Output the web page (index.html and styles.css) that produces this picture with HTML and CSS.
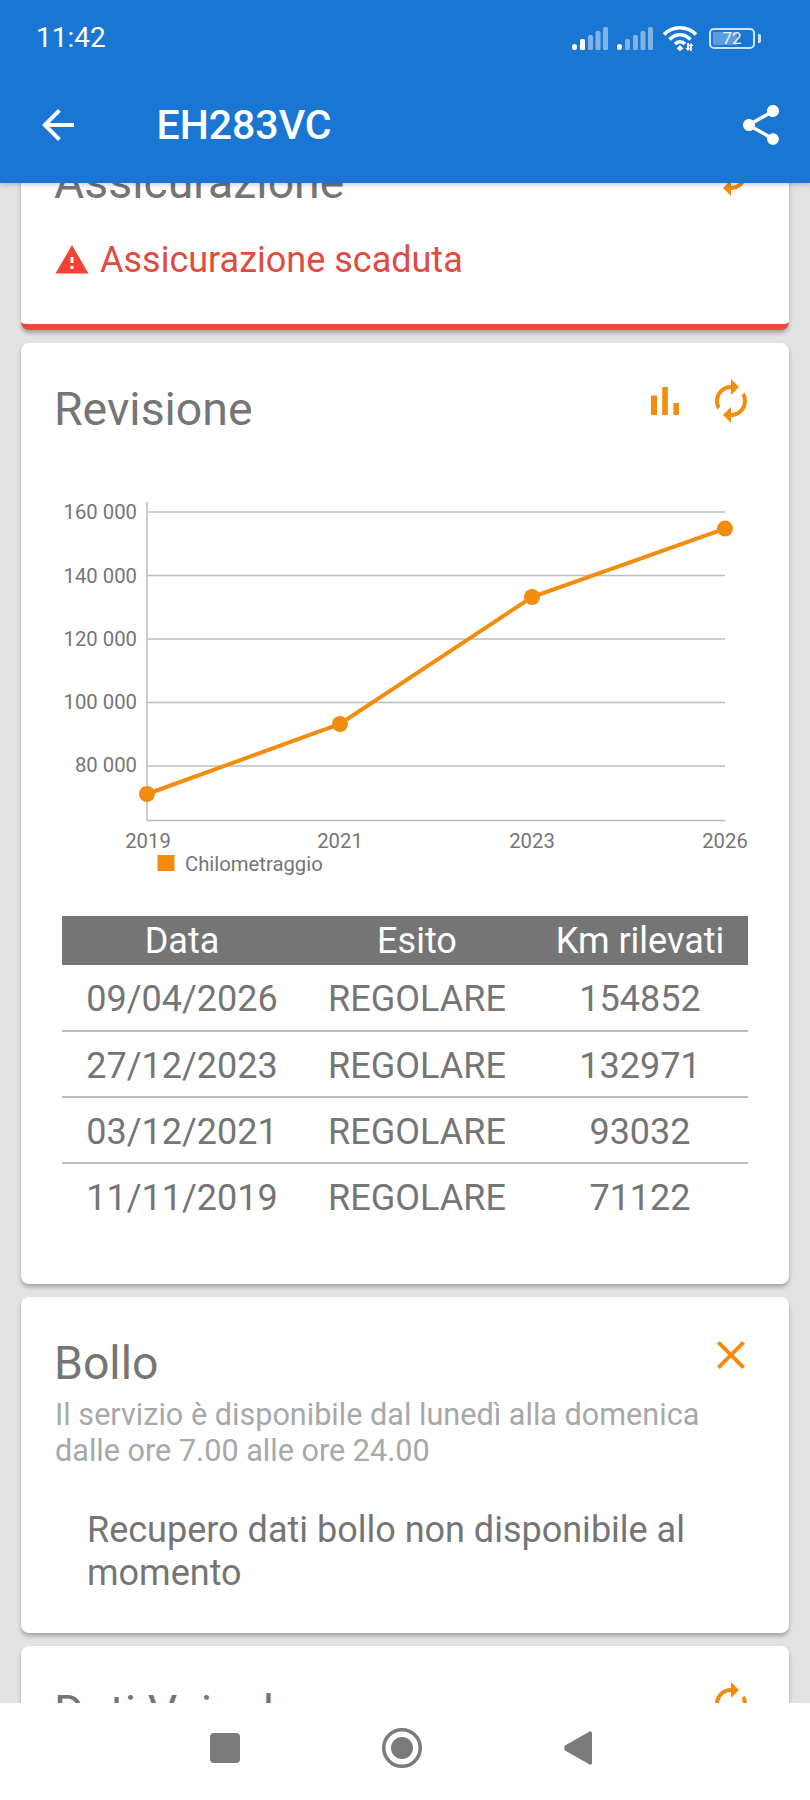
FILE: index.html
```html
<!DOCTYPE html>
<html lang="it">
<head>
<meta charset="utf-8">
<title>EH283VC</title>
<link rel="stylesheet" href="styles.css">
</head>
<body>
<div class="phone">
  <header class="topbar">
    <div class="status">
      <span class="time">11:42</span>
      <div class="status-icons">
        <svg class="signal" viewBox="0 0 36 23"><rect class="on" x="0" y="17" width="5" height="6" rx="2.5"/><rect class="on" x="8" y="12" width="5" height="11" rx="1.5"/><rect class="off" x="16" y="8" width="5" height="15" rx="1.5"/><rect class="off" x="23.500" y="4" width="5" height="19" rx="1.5"/><rect class="off" x="31" y="0" width="5" height="23" rx="1.5"/></svg>
        <svg class="signal" viewBox="0 0 36 23"><rect class="on" x="0" y="17" width="5" height="6" rx="2.5"/><rect class="off" x="8" y="12" width="5" height="11" rx="1.5"/><rect class="off" x="16" y="8" width="5" height="15" rx="1.5"/><rect class="off" x="23.500" y="4" width="5" height="19" rx="1.5"/><rect class="off" x="31" y="0" width="5" height="23" rx="1.5"/></svg>
        <svg class="wifi" viewBox="0 0 34 26"><path class="wifi-arc" d="M1 9.500C10 .5 24 .5 33 9.500M6.500 14.500C13 8 21 8 27.500 14.500M12 19C15 16 19 16 22 19"/><path class="wifi-fill" d="M17 20l3.500 3.500L17 26l-3.500-2.500zM24 18h2v5h1.500L25 26l-2.500-3H24zM28 18l2.500 3H29v5h-2v-5h-1.500z"/></svg>
        <div class="battery"><span class="battery-level"></span><span class="battery-text">72</span></div>
        <span class="battery-nub"></span>
      </div>
    </div>
    <div class="appbar">
      <svg class="icon-white" viewBox="0 0 24 24"><path d="M20 11H7.830l5.590-5.590L12 4l-8 8 8 8 1.410-1.410L7.830 13H20v-2z"/></svg>
      <h1 class="plate">EH283VC</h1>
      <svg class="icon-white share" viewBox="0 0 24 24"><path d="M18 16.080c-.76 0-1.440.3-1.960.77L8.910 12.700c.05-.23.09-.46.09-.7s-.04-.47-.09-.7l7.050-4.110c.54.5 1.250.81 2.040.81 1.660 0 3-1.340 3-3s-1.340-3-3-3-3 1.340-3 3c0 .24.04.47.09.7L8.040 9.810C7.500 9.310 6.790 9 6 9c-1.660 0-3 1.340-3 3s1.340 3 3 3c.79 0 1.500-.31 2.040-.81l7.120 4.160c-.05.21-.08.43-.08.65 0 1.610 1.310 2.920 2.920 2.920 1.610 0 2.920-1.310 2.920-2.920s-1.310-2.920-2.920-2.920z"/></svg>
    </div>
  </header>

  <main class="content">
    <section class="card card-alert">
      <div class="card-head">
        <h2>Assicurazione</h2>
        <div class="actions">
          <svg class="icon-orange mirrored" viewBox="0 0 24 24"><path d="M12 4V1L8 5l4 4V6c3.310 0 6 2.690 6 6 0 1.010-.25 1.970-.7 2.800l1.460 1.460C19.540 15.030 20 13.570 20 12c0-4.420-3.580-8-8-8zm0 14c-3.310 0-6-2.690-6-6 0-1.010.25-1.970.7-2.800L5.240 7.740C4.460 8.970 4 10.430 4 12c0 4.420 3.580 8 8 8v3l4-4-4-4v3z"/></svg>
        </div>
      </div>
      <p class="alert">
        <svg class="icon-red" viewBox="0 0 24 24"><path d="M1 21h22L12 2 1 21zm12-3h-2v-2h2v2zm0-4h-2v-4h2v4z"/></svg>
        <span>Assicurazione scaduta</span>
      </p>
    </section>

    <section class="card card-revision">
      <div class="card-head">
        <h2>Revisione</h2>
        <div class="actions">
          <svg class="icon-orange" viewBox="0 0 24 24"><path d="M5 9.200h3V19H5zM10.600 5h2.800v14h-2.800zm5.600 8H19v6h-2.800z"/></svg>
          <svg class="icon-orange mirrored" viewBox="0 0 24 24"><path d="M12 4V1L8 5l4 4V6c3.310 0 6 2.690 6 6 0 1.010-.25 1.970-.7 2.800l1.460 1.460C19.540 15.030 20 13.570 20 12c0-4.420-3.580-8-8-8zm0 14c-3.310 0-6-2.690-6-6 0-1.010.25-1.970.7-2.800L5.240 7.740C4.460 8.970 4 10.430 4 12c0 4.420 3.580 8 8 8v3l4-4-4-4v3z"/></svg>
        </div>
      </div>
      <svg class="chart" viewBox="0 0 700 390">
        <g class="grid">
          <line x1="92" y1="22" x2="670" y2="22"/>
          <line x1="92" y1="85.500" x2="670" y2="85.500"/>
          <line x1="92" y1="149" x2="670" y2="149"/>
          <line x1="92" y1="212.500" x2="670" y2="212.500"/>
          <line x1="92" y1="276" x2="670" y2="276"/>
          <line x1="92" y1="330.500" x2="670" y2="330.500"/>
          <line x1="92" y1="12" x2="92" y2="331"/>
        </g>
        <g class="ylabels">
          <text x="82" y="29">160 000</text>
          <text x="82" y="92.500">140 000</text>
          <text x="82" y="156">120 000</text>
          <text x="82" y="219">100 000</text>
          <text x="82" y="282">80 000</text>
        </g>
        <g class="xlabels">
          <text x="93" y="358">2019</text>
          <text x="285" y="358">2021</text>
          <text x="477" y="358">2023</text>
          <text x="670" y="358">2026</text>
        </g>
        <polyline class="series" points="92,304 285,234 477,107 670,38.600"/>
        <g class="dots">
          <circle cx="92" cy="304" r="8"/>
          <circle cx="285" cy="234" r="8"/>
          <circle cx="477" cy="107" r="8"/>
          <circle cx="670" cy="38.600" r="8"/>
        </g>
        <rect class="legend-key" x="102.500" y="365" width="17" height="16"/>
        <text class="legend-text" x="130" y="381">Chilometraggio</text>
      </svg>
      <table class="history">
        <colgroup><col class="col-date"><col class="col-result"><col class="col-km"></colgroup>
        <thead><tr><th>Data</th><th>Esito</th><th>Km rilevati</th></tr></thead>
        <tbody>
          <tr><td>09/04/2026</td><td>REGOLARE</td><td>154852</td></tr>
          <tr><td>27/12/2023</td><td>REGOLARE</td><td>132971</td></tr>
          <tr><td>03/12/2021</td><td>REGOLARE</td><td>93032</td></tr>
          <tr><td>11/11/2019</td><td>REGOLARE</td><td>71122</td></tr>
        </tbody>
      </table>
    </section>

    <section class="card card-tax">
      <div class="card-head">
        <h2>Bollo</h2>
        <div class="actions">
          <svg class="icon-orange" viewBox="0 0 24 24"><path d="M19 6.410L17.590 5 12 10.590 6.410 5 5 6.410 10.590 12 5 17.590 6.410 19 12 13.410 17.590 19 19 17.590 13.410 12z"/></svg>
        </div>
      </div>
      <p class="hint">Il servizio è disponibile dal lunedì alla domenica dalle ore 7.00 alle ore 24.00</p>
      <p class="message">Recupero dati bollo non disponibile al momento</p>
    </section>

    <section class="card">
      <div class="card-head">
        <h2>Dati Veicolo</h2>
        <div class="actions">
          <svg class="icon-orange mirrored" viewBox="0 0 24 24"><path d="M12 4V1L8 5l4 4V6c3.310 0 6 2.690 6 6 0 1.010-.25 1.970-.7 2.800l1.460 1.460C19.540 15.030 20 13.570 20 12c0-4.420-3.580-8-8-8zm0 14c-3.310 0-6-2.690-6-6 0-1.010.25-1.970.7-2.800L5.240 7.740C4.460 8.970 4 10.430 4 12c0 4.420 3.580 8 8 8v3l4-4-4-4v3z"/></svg>
        </div>
      </div>
    </section>
  </main>

  <nav class="navbar">
    <svg class="nav-square" viewBox="0 0 30 30"><rect width="30" height="30" rx="4"/></svg>
    <svg class="nav-circle" viewBox="0 0 40 40"><circle class="ring" cx="20" cy="20" r="18.250"/><circle cx="20" cy="20" r="11"/></svg>
    <svg class="nav-back" viewBox="0 0 28 34"><path d="M28 1.500V32.500L26.500 34 1 19.500Q-.5 17 1 14.500L26.500 0z"/></svg>
  </nav>
</div>
</body>
</html>
```

FILE: styles.css
```css
* { box-sizing: border-box; }
html, body { margin: 0; padding: 0; }
body { font-family: Roboto, "Noto Sans", sans-serif; color: #757575; background: #e3e3e3; }
h1, h2, p { margin: 0; font-weight: 400; }

.phone { width: 810px; height: 1800px; display: flex; flex-direction: column; overflow: hidden; }

.topbar { flex: 0 0 183px; background: #1976d2; color: #fff; position: relative; z-index: 2; box-shadow: 0 2px 5px rgba(0,0,0,.2); }
.status { height: 76px; display: flex; align-items: center; justify-content: space-between; padding: 0 49px 0 36px; }
.time { font-size: 28px; line-height: 78px; }
.status-icons { display: flex; align-items: center; }
.signal { width: 36px; height: 23px; margin-right: 9px; }
.signal .on { fill: #fff; }
.signal .off { fill: #fff; opacity: .45; }
.signal + .signal { margin-right: 10px; }
.wifi { width: 34px; height: 26px; margin-right: 12px; }
.wifi-arc { fill: none; stroke: #fff; stroke-width: 3.500; }
.wifi-fill { fill: #fff; }
.battery { width: 46px; height: 21px; border: 2.500px solid #cfe3f7; border-radius: 5px; position: relative; display: flex; align-items: center; justify-content: center; }
.battery-level { position: absolute; left: 2px; top: 2px; bottom: 2px; width: 24px; background: #5b9ce0; border-radius: 1px; }
.battery-text { position: relative; font-size: 17px; line-height: 16px; color: #eaf3fc; }
.battery-nub { width: 3px; height: 9px; margin-left: 3px; background: #cfe3f7; border-radius: 0 2px 2px 0; }

.appbar { height: 97px; display: flex; align-items: center; padding: 0 25px 0 33.500px; }
.appbar svg { width: 48px; height: 48px; flex: none; }
.icon-white { fill: #fff; }
.plate { font-size: 41px; font-weight: 500; line-height: 48px; margin-left: 75px; flex: 1; }

.content { flex: 1; min-height: 0; overflow: hidden; padding: 0 21px; display: flex; flex-direction: column; gap: 13px; }
.card { flex: none; background: #fff; border-radius: 8px; box-shadow: 0 3px 4px rgba(0,0,0,.28); padding: 34px 34px 0; }
.card-alert { margin-top: -67px; height: 214px; border-bottom: 6px solid #f0483b; }
.card-revision { height: 941px; }
.card-tax { height: 336px; }

.card-head { display: flex; justify-content: space-between; align-items: flex-start; }
.card-head h2 { font-size: 46.400px; line-height: 60px; margin: 2px 0 0 -1px; }
.actions { display: flex; gap: 18px; }
.actions svg { width: 48px; height: 48px; }
.icon-orange { fill: #f28c0c; }
.mirrored { transform: scaleX(-1); }

.alert { display: flex; align-items: center; gap: 10px; margin: 30px 0 0 -1px; font-size: 36px; line-height: 36px; color: #e04b42; }
.icon-red { width: 36px; height: 36px; fill: #f44336; flex: none; }

.chart { display: block; width: 700px; height: 390px; margin-top: 51px; }
.chart text { font-family: Roboto, sans-serif; font-size: 20.300px; fill: #757575; }
.grid line { stroke: #bdbdbd; stroke-width: 1.500; }
.ylabels text { text-anchor: end; }
.xlabels text { text-anchor: middle; }
.series { fill: none; stroke: #f28c0c; stroke-width: 4; }
.dots circle, .legend-key { fill: #f28c0c; }

.history { width: 686px; margin: 36px 0 0 7px; border-collapse: collapse; table-layout: fixed; }
.col-date { width: 240px; }
.col-result { width: 230px; }
.col-km { width: 216px; }
.history th { height: 49px; padding: 1px 0 0; background: #757575; color: #fff; font-size: 36px; font-weight: 400; text-align: center; }
.history td { height: 66px; padding: 3px 0 0; font-size: 36px; text-align: center; border-bottom: 2px solid #bdbdbd; }
.history tr:last-child td { border-bottom-color: transparent; }

.hint { font-size: 30.600px; line-height: 36px; color: #a8a8a8; margin-top: 4px; }
.message { font-size: 36px; line-height: 42.500px; margin: 40px 0 0 32px; }

.navbar { flex: 0 0 97px; background: #fff; position: relative; z-index: 2; display: flex; align-items: center; padding: 0 0 7px 210px; gap: 142px; }
.navbar svg { flex: none; fill: #7a7a7a; }
.nav-square { width: 30px; height: 30px; }
.nav-circle { width: 40px; height: 40px; }
.nav-circle .ring { fill: none; stroke: #7a7a7a; stroke-width: 3.500; }
.nav-back { width: 28px; height: 34px; }
```
